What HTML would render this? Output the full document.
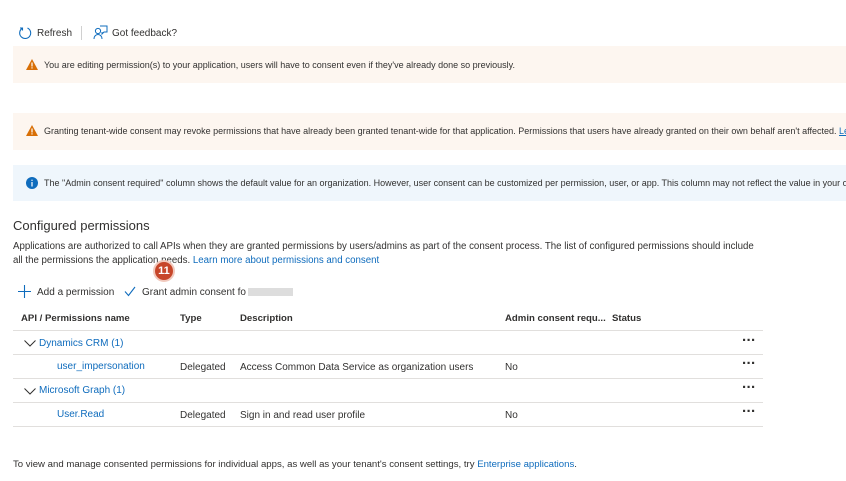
<!DOCTYPE html>
<html><head><style>
body{margin:0;width:846px;height:481px;background:#fff;font-family:"Liberation Sans",sans-serif;font-size:10px;color:#323130;position:relative;overflow:hidden}
.a{position:absolute;white-space:nowrap}
.ban{position:absolute;left:13px;right:0;background:#fdf6f0}
.blue{color:#0f6cbd}
.hl{position:absolute;left:13px;width:750px;height:1px;background:#e1dfdd}
.dots{font-size:15px;font-weight:bold;letter-spacing:-0.5px}
</style></head><body>
<svg class="a" style="left:18px;top:26px" width="14" height="14" viewBox="0 0 14 14"><path d="M4 2.5A5.5 5.5 0 1 0 9.5 2" fill="none" stroke="#0f6cbd" stroke-width="1.1"/><path d="M2 2h2.5v2.5" fill="none" stroke="#0f6cbd" stroke-width="1.1"/></svg>
<div class="a" style="left:37px;top:28px">Refresh</div>
<div class="a" style="left:81px;top:26px;width:1px;height:14px;background:#d0d0d0"></div>
<svg class="a" style="left:93px;top:25px" width="15" height="15" viewBox="0 0 15 15"><circle cx="5" cy="6" r="2.6" fill="none" stroke="#0f6cbd"/><path d="M1 14c0-3 2-4.5 4-4.5s4 1.5 4 4.5" fill="none" stroke="#0f6cbd"/><path d="M7 1h7v6h-3l-2 2V7" fill="none" stroke="#0f6cbd"/></svg>
<div class="a" style="left:112px;top:28px">Got feedback?</div>
<div class="ban" style="top:46px;height:37px"></div>
<svg class="a" style="left:26px;top:59px" width="12" height="11" viewBox="0 0 12 11"><path d="M6 0L12 11H0z" fill="#d86f06"/><rect x="5.4" y="3.5" width="1.2" height="4" fill="#fff"/><rect x="5.4" y="8.3" width="1.2" height="1.2" fill="#fff"/></svg>
<div class="a" style="left:44px;top:60px;font-size:9px">You are editing permission(s) to your application, users will have to consent even if they've already done so previously.</div>
<div class="ban" style="top:113px;height:37px"></div>
<svg class="a" style="left:26px;top:125px" width="12" height="11" viewBox="0 0 12 11"><path d="M6 0L12 11H0z" fill="#d86f06"/><rect x="5.4" y="3.5" width="1.2" height="4" fill="#fff"/><rect x="5.4" y="8.3" width="1.2" height="1.2" fill="#fff"/></svg>
<div class="a" style="left:44px;top:126px;font-size:9px">Granting tenant-wide consent may revoke permissions that have already been granted tenant-wide for that application. Permissions that users have already granted on their own behalf aren't affected. <span class="blue" style="text-decoration:underline">Le</span></div>
<div class="ban" style="top:165px;height:36px;background:#eff6fc"></div>
<svg class="a" style="left:26px;top:177px" width="12" height="12" viewBox="0 0 12 12"><circle cx="6" cy="6" r="6" fill="#0f6cbd"/><rect x="5.4" y="5" width="1.2" height="4.5" fill="#fff"/><rect x="5.4" y="2.7" width="1.2" height="1.2" fill="#fff"/></svg>
<div class="a" style="left:44px;top:178px;font-size:9px">The "Admin consent required" column shows the default value for an organization. However, user consent can be customized per permission, user, or app. This column may not reflect the value in your or</div>
<div class="a" style="left:13px;top:218px;font-size:13px">Configured permissions</div>
<div class="a" style="left:13px;top:241px;font-size:9.7px">Applications are authorized to call APIs when they are granted permissions by users/admins as part of the consent process. The list of configured permissions should include</div>
<div class="a" style="left:13px;top:255px;font-size:9.7px">all the permissions the application needs. <span class="blue">Learn more about permissions and consent</span></div>
<div class="a" style="left:153px;top:260px;width:22px;height:22px;border-radius:50%;background:#c7462a;border:2px solid #f1c9bd;box-sizing:border-box;color:#fff;font-weight:bold;font-size:11px;text-align:center;line-height:18px">11</div>
<svg class="a" style="left:18px;top:285px" width="13" height="13" viewBox="0 0 13 13"><path d="M6.5 0v13M0 6.5h13" stroke="#0f6cbd" stroke-width="1.1"/></svg>
<div class="a" style="left:37px;top:287px">Add a permission</div>
<svg class="a" style="left:124px;top:286px" width="12" height="11" viewBox="0 0 12 11"><path d="M1 5.5l3.5 4L11 1" fill="none" stroke="#0f6cbd" stroke-width="1.1"/></svg>
<div class="a" style="left:142px;top:287px">Grant admin consent fo<span style="display:inline-block;width:45px;height:8px;background:#ddd;vertical-align:middle;margin-left:2px"></span></div>
<div class="a" style="left:21px;top:313px;font-weight:bold;font-size:9.6px">API / Permissions name</div>
<div class="a" style="left:180px;top:313px;font-weight:bold;font-size:9.6px">Type</div>
<div class="a" style="left:240px;top:313px;font-weight:bold;font-size:9.6px">Description</div>
<div class="a" style="left:505px;top:313px;font-weight:bold;font-size:9.6px">Admin consent requ...</div>
<div class="a" style="left:612px;top:313px;font-weight:bold;font-size:9.6px">Status</div>
<div class="hl" style="top:330px"></div>
<svg class="a" style="left:24px;top:340px" width="12" height="7" viewBox="0 0 12 7"><path d="M0.5 0.5l5.5 5.5 5.5-5.5" fill="none" stroke="#323130"/></svg>
<div class="a blue" style="left:39px;top:338px">Dynamics CRM (1)</div>
<div class="a dots" style="left:742px;top:332px">···</div>
<div class="hl" style="top:354px"></div>
<div class="a blue" style="left:57px;top:361px">user_impersonation</div>
<div class="a" style="left:180px;top:362px">Delegated</div>
<div class="a" style="left:240px;top:362px">Access Common Data Service as organization users</div>
<div class="a" style="left:505px;top:362px">No</div>
<div class="a dots" style="left:742px;top:355px">···</div>
<div class="hl" style="top:378px"></div>
<svg class="a" style="left:24px;top:388px" width="12" height="7" viewBox="0 0 12 7"><path d="M0.5 0.5l5.5 5.5 5.5-5.5" fill="none" stroke="#323130"/></svg>
<div class="a blue" style="left:39px;top:385px">Microsoft Graph (1)</div>
<div class="a dots" style="left:742px;top:379px">···</div>
<div class="hl" style="top:402px"></div>
<div class="a blue" style="left:57px;top:409px">User.Read</div>
<div class="a" style="left:180px;top:410px">Delegated</div>
<div class="a" style="left:240px;top:410px">Sign in and read user profile</div>
<div class="a" style="left:505px;top:410px">No</div>
<div class="a dots" style="left:742px;top:403px">···</div>
<div class="hl" style="top:426px"></div>
<div class="a" style="left:13px;top:459px;font-size:9.6px">To view and manage consented permissions for individual apps, as well as your tenant's consent settings, try <span class="blue">Enterprise applications</span>.</div>
</body></html>
